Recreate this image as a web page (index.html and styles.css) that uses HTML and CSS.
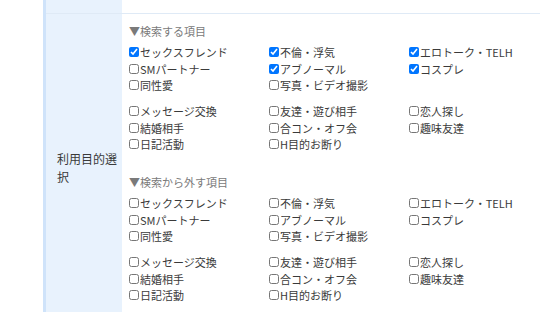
FILE: index.html
```html
<!DOCTYPE html>
<html lang="ja">
<head>
<meta charset="utf-8">
<link rel="stylesheet" href="styles.css">
</head>
<body>
<div class="table">
  <div class="row row-prev">
    <div class="label"></div>
    <div class="content"></div>
  </div>
  <div class="row">
    <div class="label"><span class="label-text">利用目的選択</span></div>
    <div class="content main">
      <div class="section">
        <div class="heading">▼検索する項目</div>
        <div class="group">
          <label class="item"><input type="checkbox" checked>セックスフレンド</label>
          <label class="item"><input type="checkbox" checked>不倫・浮気</label>
          <label class="item"><input type="checkbox" checked>エロトーク・TELH</label>
          <label class="item"><input type="checkbox">SMパートナー</label>
          <label class="item"><input type="checkbox" checked>アブノーマル</label>
          <label class="item"><input type="checkbox" checked>コスプレ</label>
          <label class="item"><input type="checkbox">同性愛</label>
          <label class="item"><input type="checkbox">写真・ビデオ撮影</label>
        </div>
        <div class="group">
          <label class="item"><input type="checkbox">メッセージ交換</label>
          <label class="item"><input type="checkbox">友達・遊び相手</label>
          <label class="item"><input type="checkbox">恋人探し</label>
          <label class="item"><input type="checkbox">結婚相手</label>
          <label class="item"><input type="checkbox">合コン・オフ会</label>
          <label class="item"><input type="checkbox">趣味友達</label>
          <label class="item"><input type="checkbox">日記活動</label>
          <label class="item"><input type="checkbox">H目的お断り</label>
        </div>
      </div>
      <div class="section">
        <div class="heading">▼検索から外す項目</div>
        <div class="group">
          <label class="item"><input type="checkbox">セックスフレンド</label>
          <label class="item"><input type="checkbox">不倫・浮気</label>
          <label class="item"><input type="checkbox">エロトーク・TELH</label>
          <label class="item"><input type="checkbox">SMパートナー</label>
          <label class="item"><input type="checkbox">アブノーマル</label>
          <label class="item"><input type="checkbox">コスプレ</label>
          <label class="item"><input type="checkbox">同性愛</label>
          <label class="item"><input type="checkbox">写真・ビデオ撮影</label>
        </div>
        <div class="group">
          <label class="item"><input type="checkbox">メッセージ交換</label>
          <label class="item"><input type="checkbox">友達・遊び相手</label>
          <label class="item"><input type="checkbox">恋人探し</label>
          <label class="item"><input type="checkbox">結婚相手</label>
          <label class="item"><input type="checkbox">合コン・オフ会</label>
          <label class="item"><input type="checkbox">趣味友達</label>
          <label class="item"><input type="checkbox">日記活動</label>
          <label class="item"><input type="checkbox">H目的お断り</label>
        </div>
      </div>
    </div>
  </div>
</div>
</body>
</html>
```
FILE: styles.css
```css
html, body {
  margin: 0;
  padding: 0;
  background: #ffffff;
  overflow: hidden;
}
body {
  font-family: "Noto Sans CJK JP", "Noto Sans", sans-serif;
  color: #333333;
}
.table {
  margin-left: 43px;
  border-left: 3px solid #cfe3fa;
}
.row {
  display: flex;
  border-bottom: 1px solid #dfeaf6;
}
.row-prev {
  height: 13px;
}
.label {
  width: 76px;
  flex: none;
  background: #e8f2fd;
  box-sizing: border-box;
  padding: 0 4px 0 11px;
  display: flex;
  align-items: center;
}
.label-text {
  font-size: 12px;
  line-height: 18px;
  color: #3a3a3a;
}
.content {
  flex: 1;
  min-width: 0;
  background: #fff;
}
.main {
  padding: 9px 0 18px 7px;
  display: flex;
  flex-direction: column;
  gap: 21.5px;
}
.section {
  display: flex;
  flex-direction: column;
}
.heading {
  font-size: 11px;
  line-height: 16.5px;
  color: #7a7a7a;
  margin-bottom: 4.5px;
}
.group {
  display: grid;
  grid-template-columns: 140px 140px 1fr;
  font-size: 11px;
  line-height: 16.5px;
}
.group + .group {
  margin-top: 9.5px;
}
.item {
  display: flex;
  align-items: center;
  white-space: nowrap;
  color: #3a3a3a;
}
.item input {
  width: 10px;
  height: 10px;
  margin: 0 1px 0 0;
  flex: none;
}
```
